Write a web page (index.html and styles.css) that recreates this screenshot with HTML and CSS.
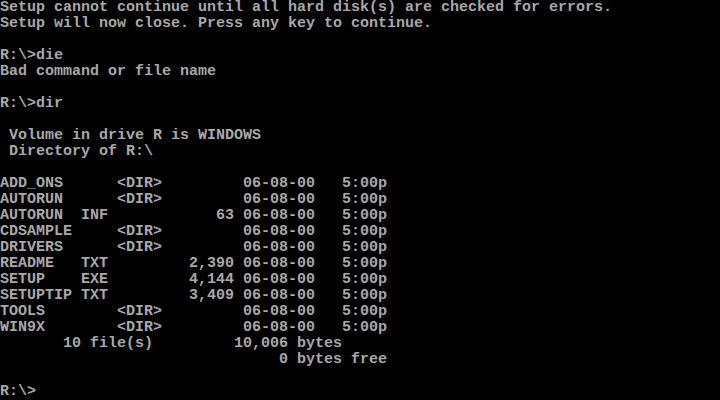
FILE: index.html
```html
<!DOCTYPE html>
<html>
<head>
<meta charset="utf-8">
<link rel="stylesheet" href="styles.css">
</head>
<body>
<pre class="screen">Setup cannot continue until all hard disk(s) are checked for errors.
Setup will now close. Press any key to continue.

R:\&gt;die
Bad command or file name

R:\&gt;dir

 Volume in drive R is WINDOWS
 Directory of R:\

ADD_ONS      &lt;DIR&gt;         06-08-00   5:00p
AUTORUN      &lt;DIR&gt;         06-08-00   5:00p
AUTORUN  INF            63 06-08-00   5:00p
CDSAMPLE     &lt;DIR&gt;         06-08-00   5:00p
DRIVERS      &lt;DIR&gt;         06-08-00   5:00p
README   TXT         2,390 06-08-00   5:00p
SETUP    EXE         4,144 06-08-00   5:00p
SETUPTIP TXT         3,409 06-08-00   5:00p
TOOLS        &lt;DIR&gt;         06-08-00   5:00p
WIN9X        &lt;DIR&gt;         06-08-00   5:00p
       10 file(s)         10,006 bytes
                               0 bytes free

R:\&gt;</pre>
</body>
</html>
```
FILE: styles.css
```css
html, body {
  margin: 0;
  padding: 0;
  background: #000;
  width: 720px;
  height: 400px;
  overflow: hidden;
}
.screen {
  margin: 0;
  padding: 0;
  font-family: "Liberation Mono", monospace;
  font-size: 15px;
  font-weight: bold;
  line-height: 16px;
  color: #a8a8a8;
  white-space: pre;
}
```
